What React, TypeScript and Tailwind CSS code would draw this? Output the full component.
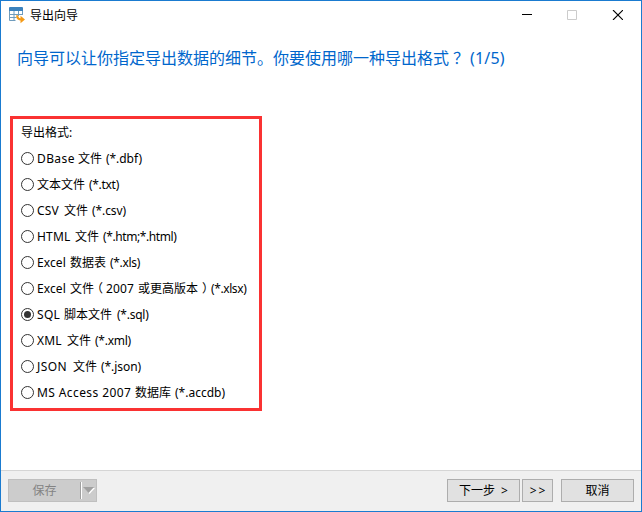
import React from "react";

type Run = [text: string, className: string];

const formats: Run[][] = [
  [["DBase", "w-[41px] tracking-[0.4px]"], ["文件", "w-[28px]"], ["(*.dbf)", "tracking-[-0.05px]"]],
  [["文本文件", "w-[52px]"], ["(*.txt)", "tracking-[-0.3px]"]],
  [["CSV", "w-[27px] tracking-[0.2px]"], ["文件", "w-[28px]"], ["(*.csv)", "tracking-[-0.1px]"]],
  [["HTML", "w-[38px] tracking-[0.2px]"], ["文件", "w-[28px]"], ["(*.htm;*.html)", "tracking-[-0.4px]"]],
  [["Excel", "w-[33px] tracking-[0.1px]"], ["数据表", "w-[40px]"], ["(*.xls)", "tracking-[-0.3px]"]],
  [
    ["Excel", "w-[33px] tracking-[0.1px]"],
    ["文件", "w-[27px]"],
    ["（", "w-[9px] [font-feature-settings:'halt']"],
    ["2007", "w-[32px] tracking-[0.1px]"],
    ["或更高版本", "w-[64px]"],
    ["）", "w-[9px] [font-feature-settings:'halt']"],
    ["(*.xlsx)", "tracking-[-0.4px]"],
  ],
  [["SQL", "w-[27px] tracking-[0.3px]"], ["脚本文件", "w-[53px]"], ["(*.sql)", "tracking-[-0.25px]"]],
  [["XML", "w-[30px] tracking-[0.2px]"], ["文件", "w-[28px]"], ["(*.xml)", "tracking-[-0.25px]"]],
  [["JSON", "w-[36px] tracking-[0.4px]"], ["文件", "w-[28px]"], ["(*.json)", "tracking-[-0.05px]"]],
  [["MS Access 2007", "w-[98px] tracking-[0.4px]"], ["数据库", "w-[40px]"], ["(*.accdb)", ""]],
];

function AppIcon() {
  return (
    <svg width="17" height="17" viewBox="0 0 17 17" className="shrink-0">
      <path d="M1 0h12a1 1 0 0 1 1 1v3H0V1a1 1 0 0 1 1-1z" fill="#3b82bd" />
      <path d="M0.5 4v9.5h6M13.5 4v4M.5 7.5h13M.5 10.5h7M5 4v9M9.5 4v5" fill="none" stroke="#6f9cbd" />
      <path d="M8.2 8.2c0 3.3 1.2 4.3 4.3 4.3" fill="none" stroke="#f59a16" strokeWidth="2.2" />
      <path d="M11.5 8.8 16 12.5l-4.5 3.8z" fill="#f59a16" />
    </svg>
  );
}

function Radio({ checked }: { checked: boolean }) {
  return (
    <svg width="13" height="13" viewBox="0 0 13 13" className="shrink-0">
      <circle cx="6.5" cy="6.5" r="6" fill="#fff" stroke="#333" />
      {checked && <circle cx="6.5" cy="6.5" r="3.5" fill="#333" />}
    </svg>
  );
}

export default function App() {
  return (
    <div className="flex h-[512px] w-[642px] flex-col overflow-hidden border border-[#1a7bd0] bg-white font-['Noto_Sans','Noto_Sans_CJK_SC',sans-serif] text-xs leading-4 text-black">
      <header className="flex h-7 items-center pl-2">
        <AppIcon />
        <span className="ml-1 pt-0.5">导出向导</span>
        <svg width="101" height="10" viewBox="0 0 101 10" className="mr-[18px] ml-auto" fill="none">
          <path d="M0 4.5h10" stroke="#000" />
          <path d="M45.5.5h9v9h-9z" stroke="#ccc" />
          <path d="m91 0 10 10m0-10L91 10" stroke="#000" strokeWidth="1.1" />
        </svg>
      </header>
      <h1 className="mt-[17px] ml-4 flex h-6 text-base leading-6 whitespace-nowrap text-[#0066cc]">
        <span className="w-[432px]">向导可以让你指定导出数据的细节。你要使用哪一种导出格式</span>
        <span className="w-[21px] pl-[4px]">？</span>
        <span className="tracking-[0.2px]">(1/5)</span>
      </h1>
      <fieldset className="mt-[46px] ml-[9px] h-[295px] w-[252px] border-[3px] border-[#fa3232] pt-1.5 pl-2">
        <p className="h-4">导出格式:</p>
        <div className="mt-1 flex flex-col">
          {formats.map((runs) => (
            <div key={runs.map(([text]) => text).join(" ")} className="flex h-[26px] items-center gap-[3px]">
              <Radio checked={runs[0][0] === "SQL"} />
              <span className="flex pt-0.5 whitespace-nowrap">
                {runs.map(([text, className], i) => (
                  <span key={i} className={className}>{text}</span>
                ))}
              </span>
            </div>
          ))}
        </div>
      </fieldset>
      <footer className="mt-auto flex h-[41px] items-center border-t border-[#d5d5d5] bg-[#f0f0f0] px-[7px] pb-px">
        <button className="flex h-[23px] w-[89px] items-center border border-[#bfbfbf] bg-[#ccc] text-[#838383]">
          <span className="w-[71px] pt-px">保存</span>
          <span className="h-[17px] w-px bg-[#a0a0a0]" />
          <span className="h-[17px] w-px bg-white" />
          <svg width="12" height="7" viewBox="0 0 12 7" className="ml-px">
            <path d="M1 1h11L6.5 7z" fill="#fff" />
            <path d="M0 0h11L5.5 6z" fill="#a0a0a0" />
          </svg>
        </button>
        <button className="ml-auto h-[23px] w-[73px] border border-[#adadad] bg-[#e1e1e1] pt-px">
          下一步<span className="ml-1.5">&gt;</span>
        </button>
        <button className="ml-0.5 h-[23px] w-[31px] border border-[#adadad] bg-[#e1e1e1] pt-px pl-0.5 tracking-[2px]">&gt;&gt;</button>
        <button className="ml-2 h-[23px] w-[73px] border border-[#adadad] bg-[#e1e1e1] pt-px">取消</button>
      </footer>
    </div>
  );
}
